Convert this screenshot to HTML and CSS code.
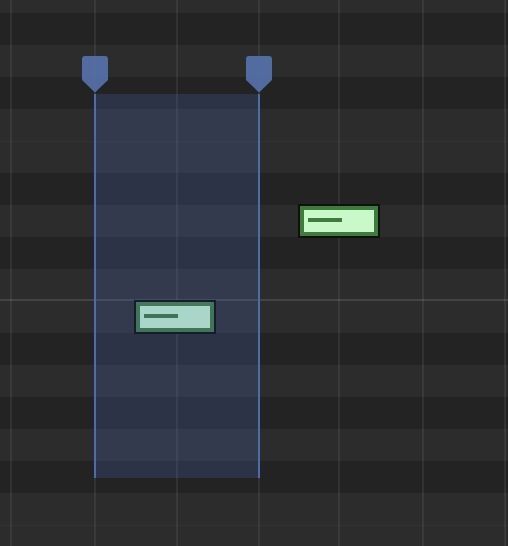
FILE: index.html
```html
<!DOCTYPE html>
<html lang="en">
<head>
    <meta charset="UTF-8">
    <meta name="viewport" content="width=device-width, initial-scale=1.0">
    <title>Piano Roll</title>
    <link rel="stylesheet" href="styles.css">
</head>
<body>
    <div class="roll">
        <!-- key rows, top = highest pitch -->
        <div class="rows">
            <div class="row white"></div>
            <div class="row black"></div>
            <div class="row white"></div>
            <div class="row black"></div>
            <div class="row white"></div>
            <div class="row white ef"></div>
            <div class="row black"></div>
            <div class="row white"></div>
            <div class="row black"></div>
            <div class="row white"></div>
            <div class="row white octave"></div>
            <div class="row black"></div>
            <div class="row white"></div>
            <div class="row black"></div>
            <div class="row white"></div>
            <div class="row black"></div>
            <div class="row white"></div>
            <div class="row white ef"></div>
        </div>

        <!-- beat lines -->
        <div class="beats">
            <div class="beat" style="width: 84px"></div>
            <div class="beat" style="width: 82px"></div>
            <div class="beat" style="width: 82px"></div>
            <div class="beat" style="width: 80px"></div>
            <div class="beat" style="width: 84px"></div>
            <div class="beat" style="width: 82px"></div>
            <div class="beat"></div>
        </div>

        <div class="selection"></div>

        <svg class="marker" style="left: 82px" width="26" height="37" viewBox="0 0 26 37">
            <path d="M0 3 Q0 0 3 0 H23 Q26 0 26 3 V24 L13 36.5 L0 24 Z"/>
        </svg>
        <svg class="marker" style="left: 246px" width="26" height="37" viewBox="0 0 26 37">
            <path d="M0 3 Q0 0 3 0 H23 Q26 0 26 3 V24 L13 36.5 L0 24 Z"/>
        </svg>

        <div class="note selected" style="left: 134px; top: 300px">
            <div class="note-body"><div class="note-bar"></div></div>
        </div>
        <div class="note" style="left: 298px; top: 204px">
            <div class="note-body"><div class="note-bar"></div></div>
        </div>
    </div>
</body>
</html>
```

FILE: styles.css
```css
body {
    margin: 0;
    background: #2c2c2c;
    font-family: "Liberation Sans", Arial, sans-serif;
}
.roll {
    position: relative;
    width: 508px;
    height: 546px;
    overflow: hidden;
}
.rows {
    display: flex;
    flex-direction: column;
    margin-top: -19px;
}
.row {
    height: 32px;
    flex: none;
}
.row.white {
    background: #2c2c2c;
}
.row.black {
    background: #232323;
}
.row.ef {
    box-shadow: inset 0 1px 0 #323232;
}
.row.octave {
    box-shadow: inset 0 -1px 0 #2c2c2c, 0 -2px 0 #444444;
}
.beats {
    position: absolute;
    top: 0;
    left: 10px;
    right: 0;
    bottom: 0;
    display: flex;
}
.beat {
    flex: none;
    box-sizing: border-box;
    border-left: 2px solid rgba(255,255,255,0.07);
}
.beat:last-child {
    flex: 1;
}
.selection {
    position: absolute;
    left: 94px;
    top: 94px;
    width: 166px;
    height: 384px;
    box-sizing: border-box;
    background: rgba(80,115,215,0.2);
    border-left: 2px solid #4b6eab;
    border-right: 2px solid #4b6eab;
}
.marker {
    position: absolute;
    top: 56px;
    display: block;
}
.marker path {
    fill: #5571a9;
    fill-opacity: 0.93;
}
.note {
    position: absolute;
    width: 82px;
    height: 34px;
    box-sizing: border-box;
    border: 2px solid #101010;
}
.note-body {
    height: 100%;
    box-sizing: border-box;
    border: 4px solid #3e7c3e;
    background: #c9f8c9;
    padding: 8px 0 0 4px;
}
.note-bar {
    width: 34px;
    height: 4px;
    background: #3e7c3e;
}
.note.selected {
    border-color: #151d2b;
}
.note.selected .note-body {
    border-color: #40755a;
    border-top-color: #437a5c;
    background: #a9d6c9;
}
.note.selected .note-bar {
    background: #3f7458;
}
```
